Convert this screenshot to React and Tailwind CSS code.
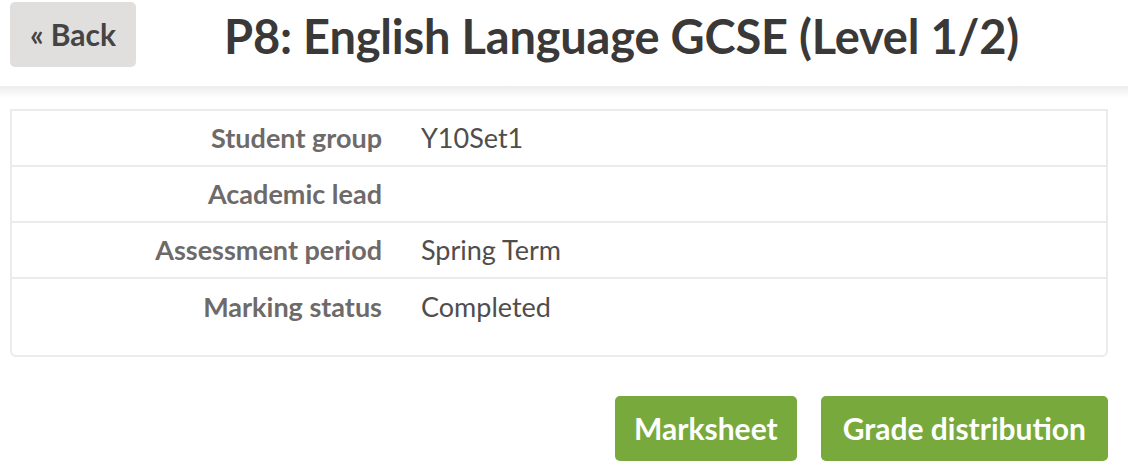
import React from 'react';

const details = [
  { label: 'Student group', value: 'Y10Set1' },
  { label: 'Academic lead', value: '' },
  { label: 'Assessment period', value: 'Spring Term' },
  { label: 'Marking status', value: 'Completed' },
];

export default function App() {
  return (
    <div className="w-[1128px] h-[474px] bg-white overflow-hidden" style={{ fontFamily: 'Lato, "Open Sans", sans-serif' }}>
      {/* Header */}
      <div className="relative h-[88px] border-b-2 border-[#e6e6e6]">
        <div className="flex items-start pl-[10px] pt-[2px]">
          <button className="w-[126px] h-[65px] rounded-[5px] bg-[#e1dfde] text-[#444] text-[30px] font-bold">
            « Back
          </button>
          <h1 className="ml-[88px] mt-[8px] text-[47px] leading-[52px] font-bold text-[#3b3838] tracking-[-0.2px]">
            P8: English Language GCSE (Level 1/2)
          </h1>
        </div>
        <div className="absolute left-0 right-0 top-full h-[12px] bg-gradient-to-b from-[#ececec] to-white"></div>
      </div>

      {/* Details table */}
      <div className="ml-[10px] mr-[20px] mt-[21px] border-2 border-[#ebebeb] rounded-b-[6px] pb-[20px]">
        {details.map((row, i) => (
          <div
            key={row.label}
            className={`flex items-center h-[56px] ${i < details.length - 1 ? 'border-b-2 border-[#ebebeb]' : ''}`}
          >
            <div className="w-[370px] text-right text-[27px] font-bold text-[#6e6a69]">{row.label}</div>
            <div className="ml-[39px] text-[27px] text-[#504d4d]">{row.value}</div>
          </div>
        ))}
      </div>

      {/* Actions */}
      <div className="flex justify-end gap-[24px] pr-[20px] mt-[39px]">
        <button className="h-[65px] px-[19px] rounded-[5px] bg-[#78a93c] text-white text-[30px] font-bold">
          Marksheet
        </button>
        <button className="h-[65px] px-[22px] rounded-[5px] bg-[#78a93c] text-white text-[30px] font-bold">
          Grade distribution
        </button>
      </div>
    </div>
  );
}
